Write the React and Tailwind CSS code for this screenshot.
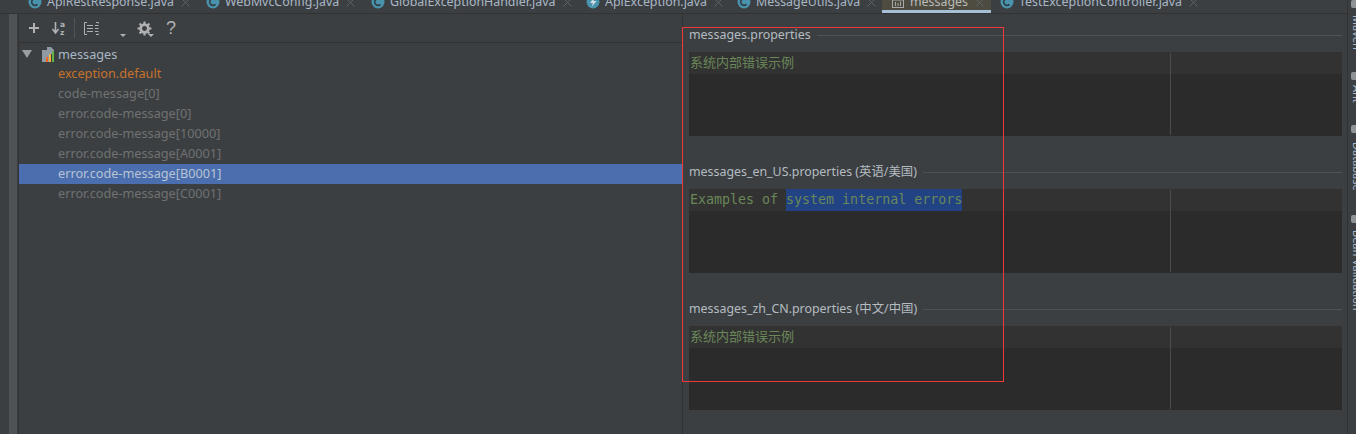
import React from 'react';

const UI_FONT = "font-['Noto_Sans','Noto_Sans_CJK_SC',sans-serif]";

const tabs = [
  { name: 'ApiRestResponse.java', width: 'w-[178px]' },
  { name: 'WebMvcConfig.java', width: 'w-[165px]' },
  { name: 'GlobalExceptionHandler.java', width: 'w-[215px]' },
  { name: 'ApiException.java', width: 'w-[151px]', exception: true },
  { name: 'MessageUtils.java', width: 'w-[154px]' },
  { name: 'messages', width: 'w-[109px]', active: true },
  { name: 'TestExceptionController.java', width: 'w-[200px]' },
];

const keys = [
  { name: 'exception.default', color: 'text-[#c7712c]' },
  { name: 'code-message[0]' },
  { name: 'error.code-message[0]' },
  { name: 'error.code-message[10000]' },
  { name: 'error.code-message[A0001]' },
  { name: 'error.code-message[B0001]', selected: true },
  { name: 'error.code-message[C0001]' },
];

const sections = [
  { title: 'messages.properties', value: '系统内部错误示例' },
  { title: 'messages_en_US.properties (英语/美国)', en: true },
  { title: 'messages_zh_CN.properties (中文/中国)', value: '系统内部错误示例' },
];

const toolWindows = [
  { name: 'Maven', iconGap: 'mt-0', textGap: 'mt-[7px]' },
  { name: 'Ant', iconGap: 'mt-[22px]', textGap: 'mt-[5px]' },
  { name: 'Database', iconGap: 'mt-[22px]', textGap: 'mt-[9px]' },
  { name: 'Bean Validation', iconGap: 'mt-[25px]', textGap: 'mt-[7px]' },
];

function ClassIcon({ exception }) {
  return (
    <svg width="14" height="14" viewBox="0 0 14 14" className="shrink-0">
      <circle cx="7" cy="7" r="6.5" fill="#4a93ad" />
      {exception ? (
        <path d="M8.5 2 L4 8 H7 L5.5 12 L10.5 6 H7.5 Z" fill="#d5dde2" />
      ) : (
        <path d="M9.5 4.6 A3.4 3.4 0 1 0 9.5 9.4" fill="none" stroke="#2f3f47" strokeWidth="1.6" />
      )}
    </svg>
  );
}

function BundleTabIcon() {
  return (
    <svg width="14" height="14" viewBox="0 0 14 14" className="shrink-0" fill="none" stroke="#a7a9ab">
      <rect x="1.5" y="1.5" width="11" height="11" />
      <path d="M1.5 5 H12.5 M4.5 7 V11 M7 8 V11 M9.5 6.5 V11" />
    </svg>
  );
}

function CloseIcon() {
  return (
    <svg width="9" height="9" viewBox="0 0 9 9" className="shrink-0" stroke="#5f6264" strokeWidth="1">
      <path d="M0.5 0.5 L8.5 8.5 M8.5 0.5 L0.5 8.5" />
    </svg>
  );
}

function Tab({ tab }) {
  return (
    <div
      className={`${tab.width} h-[26px] shrink-0 flex items-center pl-[9px] gap-[5px] ${
        tab.active ? 'bg-[#4e4c40]' : ''
      }`}
    >
      {tab.active ? <BundleTabIcon /> : <ClassIcon exception={tab.exception} />}
      <span className={`text-[12.4px] whitespace-nowrap ${tab.active ? 'text-[#bbbbbb]' : 'text-[#a9b7c6]'}`}>
        {tab.name}
      </span>
      <span className="ml-[2px]">
        <CloseIcon />
      </span>
    </div>
  );
}

function TabBar() {
  return (
    <div className="h-[14px] shrink-0 overflow-hidden border-b border-[#323232] pl-[19px]">
      <div className="flex -mt-[11px] relative">
        {tabs.map((tab) => (
          <Tab key={tab.name} tab={tab} />
        ))}
      </div>
      {/* active tab underline */}
      <div className="absolute top-[10px] left-[882px] w-[109px] h-[3px] bg-[#a6bfd9]" />
    </div>
  );
}

function Toolbar() {
  return (
    <div className="h-[29px] shrink-0 border-b border-[#323232] flex items-center pl-[8px] text-[#afb1b3]">
      <svg width="14" height="14" viewBox="0 0 14 14" stroke="#afb1b3" strokeWidth="2">
        <path d="M7 2 V12 M2 7 H12" />
      </svg>
      <svg width="16" height="16" viewBox="0 0 16 16" className="ml-[10px]" fill="none">
        <path d="M4.5 2 V12 M1.5 9 L4.5 13 L7.5 9" stroke="#afb1b3" strokeWidth="1.6" />
        <text x="9" y="7" fontSize="7.5" fill="#afb1b3" fontFamily="DejaVu Sans" fontWeight="bold">a</text>
        <text x="9" y="15" fontSize="7.5" fill="#afb1b3" fontFamily="DejaVu Sans" fontWeight="bold">z</text>
      </svg>
      <div className="w-px h-[20px] bg-[#505355] ml-[7px]" />
      <svg width="15" height="13" viewBox="0 0 15 13" className="ml-[9px]" fill="none" stroke="#afb1b3">
        <path d="M3 0.5 H0.5 V12.5 H3 M3 3.5 H9 M3 6.5 H9 M3 9.5 H9 M11 3.5 H14.5 M11 6.5 H14.5 M11 9.5 H14.5 M12 0.5 H14.5 V1.5 M12 12.5 H14.5 V11.5" />
      </svg>
      <svg width="6" height="3" viewBox="0 0 6 3" className="ml-[21px] mt-[14px]">
        <path d="M0 0 H6 L3 3 Z" fill="#afb1b3" />
      </svg>
      <svg width="15" height="15" viewBox="0 0 14 14" className="ml-[11px]" fill="none">
        <circle cx="7" cy="7" r="3.6" stroke="#afb1b3" strokeWidth="2.6" />
        <path d="M7 0.5 V3 M7 11 V13.5 M0.5 7 H3 M11 7 H13.5 M2.4 2.4 L4 4 M10 10 L11.6 11.6 M11.6 2.4 L10 4 M4 10 L2.4 11.6" stroke="#afb1b3" strokeWidth="2" />
      </svg>
      <svg width="6" height="3" viewBox="0 0 6 3" className="-ml-[4px] mt-[14px]">
        <path d="M0 0 H6 L3 3 Z" fill="#afb1b3" />
      </svg>
      <span className="font-['Liberation_Sans',sans-serif] ml-[12px] text-[18px] leading-none">?</span>
    </div>
  );
}

function BundleIcon() {
  return (
    <svg width="13" height="15" viewBox="0 0 13 15" className="shrink-0">
      <path d="M0 3 H5 V0 H9 L12 3 V7 H9 V15 H0 Z" fill="#8e9ba5" />
      <rect x="4" y="10" width="2" height="5" fill="#f26522" />
      <rect x="7" y="7" width="2" height="8" fill="#f4af3d" />
      <rect x="10" y="4" width="2" height="11" fill="#62b543" />
    </svg>
  );
}

function KeyTree() {
  return (
    <div className={`${UI_FONT} text-[12.7px] pt-px`}>
      <div className="h-[20px] flex items-center pl-[3px] text-[#a9b7c6]">
        <svg width="10" height="8" viewBox="0 0 10 8" className="shrink-0">
          <path d="M0 0 H10 L5 8 Z" fill="#9b9ea0" />
        </svg>
        <span className="ml-[10px]">
          <BundleIcon />
        </span>
        <span className="ml-[3px] mt-[2px]">messages</span>
      </div>
      {keys.map((key) => (
        <div
          key={key.name}
          className={`h-[20px] flex items-center pl-[39px] ${
            key.selected ? 'bg-[#4b6eaf] text-[#b8c4d2]' : key.color || 'text-[#6f7172]'
          }`}
        >
          {key.name}
        </div>
      ))}
    </div>
  );
}

function Section({ section }) {
  return (
    <div className="mb-[27px]">
      <div className="h-[18px] flex items-center gap-[6px]">
        <span className={`${UI_FONT} text-[12.4px] text-[#b4bcc2] whitespace-nowrap`}>{section.title}</span>
        <div className="flex-1 h-px bg-[#515151]" />
      </div>
      <div className="mt-[8px] h-[84px] bg-[#2b2b2b] relative">
        <div
          className={`h-[22px] bg-[#323232] flex items-center pl-px font-['DejaVu_Sans_Mono','Noto_Sans_CJK_SC',monospace] text-[#6a8759] whitespace-pre ${
            section.en ? 'text-[13.3px]' : 'text-[13px]'
          }`}
        >
          {section.en ? (
            <>
              Examples of <span className="h-[22px] leading-[22px] bg-[#214283]">system internal errors</span>
            </>
          ) : (
            section.value
          )}
        </div>
        <div className="absolute top-px bottom-px left-[481px] w-px bg-[#4c4c4c]" />
      </div>
    </div>
  );
}

function SideStrip() {
  return (
    <div className="w-[9px] shrink-0 border-l border-[#323232] overflow-hidden text-[#a9b7c6] text-[11px] flex flex-col">
      {toolWindows.map((item) => (
        <div key={item.name} className="flex flex-col">
          <div className={`${item.iconGap} ml-[3px] w-[6px] h-[8px] bg-[#8f9395] rounded-l-[2px]`} />
          <span className={`${item.textGap} ml-[2px] [writing-mode:vertical-rl] whitespace-nowrap leading-[14px] w-[14px]`}>
            {item.name}
          </span>
        </div>
      ))}
    </div>
  );
}

export default function App() {
  return (
    <div className={`${UI_FONT} relative w-[1356px] h-[434px] overflow-hidden bg-[#3c3f41] flex`}>
      <div className="flex-1 min-w-0 flex flex-col">
        <TabBar />
        <div className="flex-1 min-h-0 flex">
          {/* left gutter with the scrollbar */}
          <div className="w-[19px] shrink-0 border-r border-[#323232] pl-[9px]">
            <div className="w-[8px] h-full bg-[#4f5254]" />
          </div>
          <div className="w-[664px] shrink-0 border-r border-[#323232] flex flex-col">
            <Toolbar />
            <KeyTree />
          </div>
          <div className="flex-1 min-w-0 pl-[6px] pr-[5px] pt-[12px]">
            {sections.map((section) => (
              <Section key={section.title} section={section} />
            ))}
          </div>
        </div>
      </div>
      <SideStrip />
      {/* red annotation box drawn over the screenshot */}
      <div className="absolute left-[682px] top-[27px] w-[322px] h-[355px] border border-[#f0383a]" />
    </div>
  );
}
